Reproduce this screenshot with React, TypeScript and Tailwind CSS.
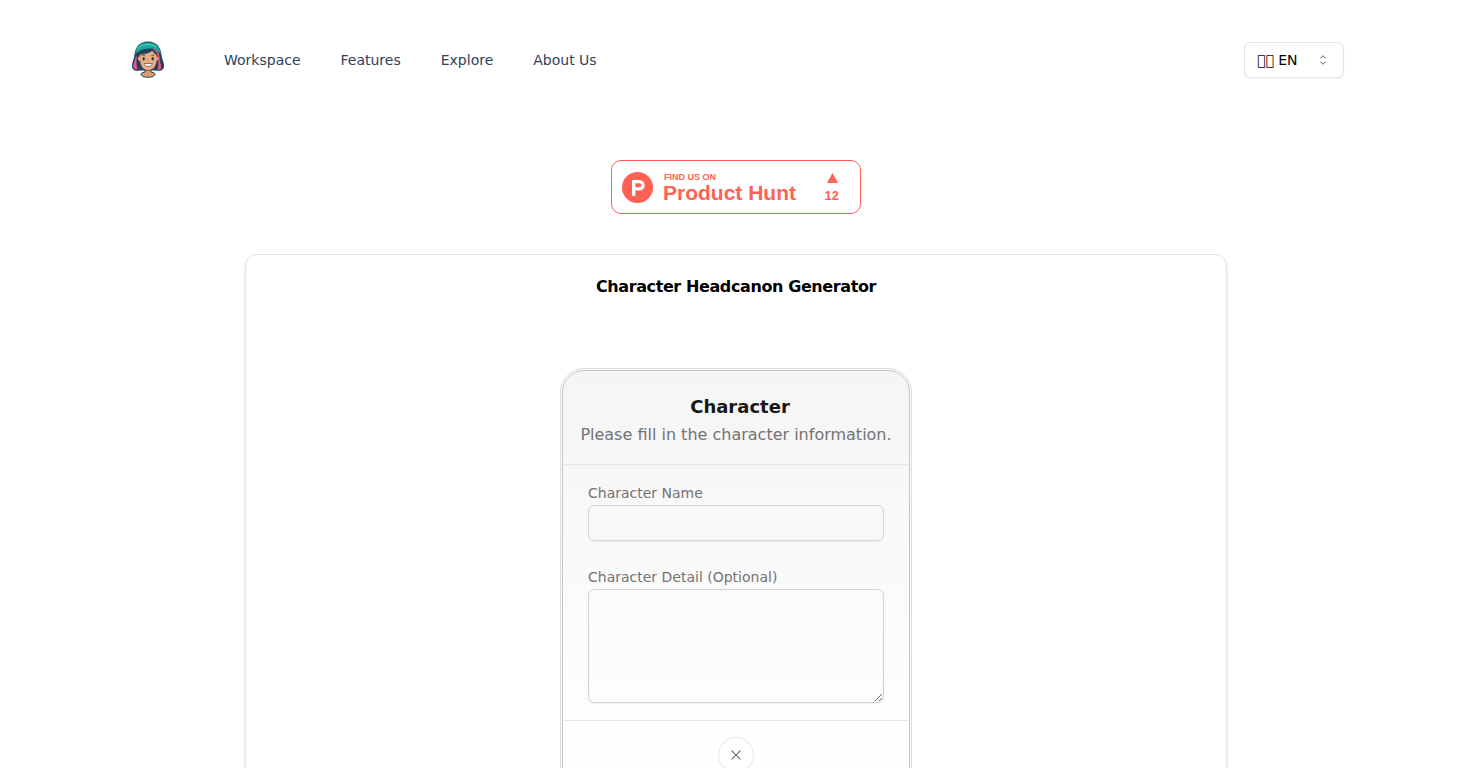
import { RxCaretSort, RxCross2 } from "react-icons/rx";

const links = ["Workspace", "Features", "Explore", "About Us"];

function Logo() {
  return (
    <svg viewBox="0 0 48 48" className="size-12" aria-hidden="true">
      <path d="M21 34v4q-4 .5-4.200 2.200Q18 43.300 24 43.300t7.200-3.100Q31 38.500 27 38v-4z" fill="#e29a68" stroke="#2a4560" strokeWidth="1" />
      <path d="M24 7.500C14.500 7.500 11 14 10.300 22c-.4 4-2.400 6-2.300 10 .2 4.500 4 5.500 8 4.500h16c4 1 7.800 0 8-4.500.1-4-1.900-6-2.300-10C37 14 33.500 7.500 24 7.500z" fill="#23415f" />
      <path d="M11.500 23c-.3 4-2.400 6-2.200 9.500.3 2.500 2.300 3 4.300 2.700C12 31 12.500 27 12.700 22z" fill="#e9557f" />
      <path d="M29 15c3.800 2 5.200 7 5.400 12 .2 3.500 0 6-1 8.500 1.500.4 2.900 0 3.600-1 .6-3-1-5.500-1.300-10-.3-4-1.700-7.500-3.700-9.500z" fill="#e9557f" />
      <path d="M11 20.500C12 12 16 8.500 24 8.500c8 0 12 4 13 12.500-1.700-3.500-4-5.300-7-6-6-1.200-14 0-19 5.500z" fill="#20a79d" />
      <path d="M14 14.500C17 10.500 25 8.800 32 12.800" fill="none" stroke="#4fcfc2" strokeWidth="1" />
      <path d="M15.800 20.500q8-.3 12.700-4 1.800 3.500 4.200 4.500c1 8-1.200 15-8.700 15.500-6.700-.5-9-7.500-8.200-16z" fill="#ecae80" stroke="#35485c" strokeWidth=".6" />
      <path d="M15.800 22.500c-2.500-.5-2.500 4.500.3 4.500zm16.700 0c2.500-.5 2.500 4.500-.3 4.500z" fill="#ecae80" />
      <path d="M18 21.700q1.400-1 3 0m6.200 0q1.600-1 3 0" fill="none" stroke="#35485c" strokeWidth=".8" />
      <ellipse cx="19.700" cy="24.700" rx="1.200" ry="1.800" fill="#23354b" />
      <ellipse cx="28.700" cy="24.700" rx="1.200" ry="1.800" fill="#23354b" />
      <path d="M20 29.500h8.500c-.5 3.800-8 3.800-8.500 0z" fill="#fff" stroke="#5b4744" strokeWidth=".7" />
      <path d="M24 25v2.300h1" fill="none" stroke="#c98258" strokeWidth=".8" />
    </svg>
  );
}

function Header() {
  return (
    <header className="mx-auto flex w-full max-w-7xl items-center justify-between px-8 pt-[34px] pb-[38px]">
      <div className="flex items-center gap-13">
        <a href="#" aria-label="Home" className="-ml-1 block">
          <Logo />
        </a>
        <nav className="flex gap-10 pt-1 text-sm text-slate-700">
          {links.map((link) => (
            <a key={link} href="#">
              {link}
            </a>
          ))}
        </nav>
      </div>
      <div className="relative pt-1">
        <select
          aria-label="Language"
          className="block h-9 w-25 appearance-none rounded-md border border-neutral-200 bg-white px-3 text-sm text-black shadow-xs"
        >
          <option>{"\uE900\uE900 EN"}</option>
        </select>
        <RxCaretSort className="pointer-events-none absolute top-3.5 right-[13px] size-4 text-black opacity-50" />
      </div>
    </header>
  );
}

function ProductHuntBadge() {
  return (
    <a
      href="#"
      className="flex h-[54px] w-[250px] items-center rounded-[10px] border border-[#ff6154] bg-white pr-[21px] pl-2.5 font-['Liberation_Sans',sans-serif] font-bold text-[#ff6154]"
    >
      <svg viewBox="0 0 31 31" className="size-[31px]" aria-hidden="true">
        <circle cx="15.500" cy="15.500" r="15.500" fill="#ff6154" />
        <path
          fillRule="evenodd"
          d="M10 8h7.500a5.200 5.200 0 0 1 0 10.400h-4.200V24H10zm3.300 3.200v4h4.200a2 2 0 0 0 0-4z"
          fill="#fff"
        />
      </svg>
      <span className="ml-2.5 flex flex-col pt-0.5">
        <span className="pl-px text-[9px] leading-[10px]">FIND US ON</span>
        <span className="text-[21px] leading-[22px]">Product Hunt</span>
      </span>
      <span className="ml-auto flex flex-col items-center gap-1 pt-[3px]">
        <svg viewBox="0 0 12 10" className="h-2.5 w-3" aria-hidden="true">
          <path d="M6.500 0L12 10H1z" fill="#ff6154" />
        </svg>
        <span className="text-[13px] leading-[18px]">12</span>
      </span>
    </a>
  );
}

function CharacterForm() {
  return (
    <form className="w-88 rounded-3xl border border-[#dcdcdc] bg-white p-px">
      <div className="rounded-[22px] border border-[#c4c4c4] bg-linear-to-b from-neutral-100 to-white p-px">
        <div className="space-y-0.5 border-b border-neutral-200 px-4 pt-[21px] pb-[17px] text-center">
          <h2 className="pl-2 text-lg font-bold text-neutral-900">Character</h2>
          <p className="whitespace-nowrap text-neutral-500">Please fill in the character information.</p>
        </div>
        <div className="flex flex-col gap-6 border-b border-neutral-200 px-6 pt-[18px] pb-[17px]">
          <div>
            <label htmlFor="name" className="block pb-0.5 text-sm text-neutral-500">
              Character Name
            </label>
            <input
              id="name"
              className="block h-9 w-full rounded-md border border-neutral-300 bg-transparent px-3 text-sm shadow-xs"
            />
          </div>
          <div className="pt-0.5">
            <label htmlFor="detail" className="block pb-0.5 text-sm text-neutral-500">
              Character Detail (Optional)
            </label>
            <textarea
              id="detail"
              className="block h-[114px] w-full resize rounded-md border border-neutral-300 bg-transparent px-3 py-2 text-sm shadow-xs"
            />
          </div>
        </div>
        <div className="flex justify-center p-4">
          <button
            type="button"
            aria-label="Clear"
            className="flex size-9 items-center justify-center rounded-full border border-neutral-200 bg-white text-neutral-500"
          >
            <RxCross2 className="size-4" />
          </button>
        </div>
      </div>
    </form>
  );
}

export default function App() {
  return (
    <div className="min-h-screen bg-white font-['DejaVu_Sans',sans-serif]">
      <Header />
      <main className="flex flex-col items-center gap-10 pt-10 pb-10">
        <ProductHuntBadge />
        <section className="flex w-2/3 flex-col items-center rounded-xl border border-neutral-200 bg-white pt-5 pb-16 shadow-sm">
          <h1 className="mb-[69px] text-base font-bold tracking-tight text-black">Character Headcanon Generator</h1>
          <CharacterForm />
        </section>
      </main>
    </div>
  );
}
